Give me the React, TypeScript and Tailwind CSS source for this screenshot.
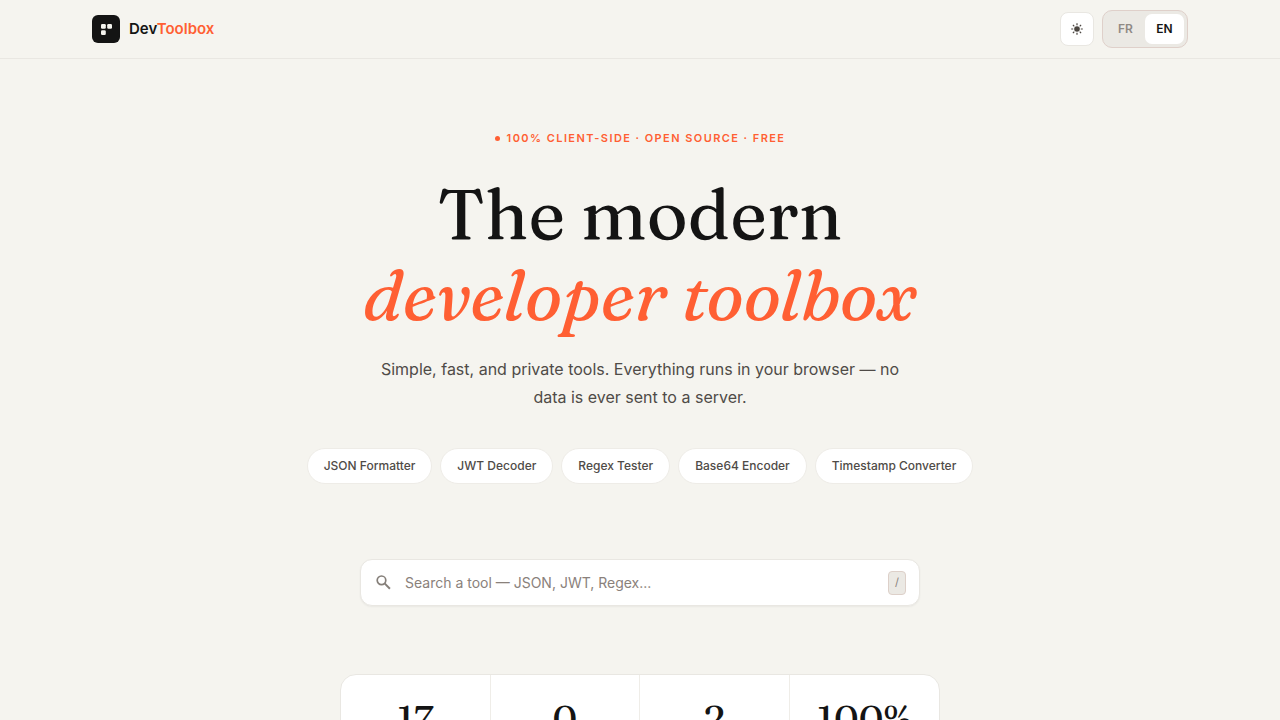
import React, { useState } from "react";
import clsx from "clsx";

const quickLinks = [
  { label: "JSON Formatter", href: "#json-formatter" },
  { label: "JWT Decoder", href: "#jwt-decoder" },
  { label: "Regex Tester", href: "#regex-tester" },
  { label: "Base64 Encoder", href: "#base64-encoder" },
  { label: "Timestamp Converter", href: "#timestamp-converter" },
];

const stats = ["17", "0", "2", "100%"];

const LogoMark = () => (
  <svg viewBox="0 0 28 28" className="size-7" aria-hidden="true">
    <rect width="28" height="28" rx="6" fill="#141414" />
    <rect x="9" y="9" width="4.8" height="4.8" rx="1.2" fill="#f5f4ef" />
    <rect x="15.2" y="9" width="4.8" height="4.8" rx="1.2" fill="#f5f4ef" />
    <rect x="9" y="15.2" width="4.8" height="4.8" rx="1.2" fill="#f5f4ef" />
  </svg>
);

const SunIcon = () => (
  <svg viewBox="0 0 12 12" className="size-3" aria-hidden="true">
    <circle cx="6" cy="6" r="2.8" fill="#4a4540" />
    <path
      d="M6 .2v2M6 9.8v2M.2 6h2M9.8 6h2M1.9 1.9l1.4 1.4M8.7 8.7l1.4 1.4M1.9 10.1l1.4-1.4M8.7 3.3l1.4-1.4"
      stroke="#4a4540"
      strokeWidth="1.2"
    />
  </svg>
);

const SearchIcon = () => (
  <svg viewBox="0 0 16 16" className="size-4 shrink-0" fill="none" aria-hidden="true">
    <circle cx="5.5" cy="5.3" r="4.3" stroke="#857f79" strokeWidth="1.7" />
    <path d="m8.6 8.4 5.3 5.3" stroke="#857f79" strokeWidth="2" />
  </svg>
);

const Header = () => {
  const [lang, setLang] = useState("EN");

  return (
    <header className="border-b border-[#e9e7e2]">
      <div className="mx-auto flex h-[58px] max-w-[1160px] items-center justify-between px-8">
        <a href="#home" className="flex items-center gap-[9px]">
          <LogoMark />
          <span className="text-[15px] font-semibold text-[#141414]">
            Dev<span className="text-[#ff5f33]">Toolbox</span>
          </span>
        </a>
        <div className="flex items-center gap-2">
          <button
            type="button"
            aria-label="Toggle theme"
            className="flex size-[34px] items-center justify-center rounded-lg border border-[#e9e7e2] bg-white"
          >
            <SunIcon />
          </button>
          <div className="flex rounded-[10px] border border-[#dfd0ca] bg-[#ebe9e4] p-[3px]">
            {["FR", "EN"].map((code) => (
              <button
                key={code}
                type="button"
                aria-pressed={lang === code}
                onClick={() => setLang(code)}
                className={clsx(
                  "h-[30px] w-[39px] rounded-[7px] text-xs font-semibold",
                  lang === code ? "bg-white text-[#141414]" : "text-[#8f8a84]"
                )}
              >
                {code}
              </button>
            ))}
          </div>
        </div>
      </div>
    </header>
  );
};

const Hero = () => (
  <section className="flex flex-col items-center pt-[71px] text-center">
    <p className="flex items-center gap-[7px] text-[11px] leading-4 font-semibold tracking-[0.13em] text-[#ff5f33] uppercase">
      <span className="size-[5px] rounded-full bg-[#ff5f33]" />
      100% client-side · Open source · Free
    </p>
    <h1 className="mt-7 font-['Fraunces','Liberation_Serif',serif] text-[70px] leading-[81px] text-[#141414] [font-feature-settings:'ss01']">
      The modern
      <em className="block text-[#ff5f33]">developer toolbox</em>
    </h1>
    <p className="mt-[19px] max-w-[520px] text-base leading-7 text-[#4f4b47]">
      Simple, fast, and private tools. Everything runs in your browser — no data
      is ever sent to a server.
    </p>
    <nav aria-label="Popular tools" className="mt-[37px] flex flex-wrap justify-center gap-2">
      {quickLinks.map(({ label, href }) => (
        <a
          key={href}
          href={href}
          className="flex h-9 items-center rounded-full border border-[#eeece7] bg-white px-4 text-xs font-medium text-[#4f4b47]"
        >
          {label}
        </a>
      ))}
    </nav>
  </section>
);

const SearchBar = () => (
  <div className="mx-auto mt-[75px] flex h-[47px] w-full max-w-[560px] items-center rounded-xl border border-[#e9e7e2] bg-white pr-[13px] pl-[15px] shadow-xs">
    <SearchIcon />
    <input
      type="search"
      aria-label="Search a tool"
      placeholder="Search a tool — JSON, JWT, Regex..."
      className="ml-[13px] min-w-0 flex-1 bg-transparent text-sm text-[#141414] outline-none placeholder:text-[#8a817b]"
    />
    <kbd className="flex h-6 w-[18px] items-center justify-center rounded-sm border border-[#ddd0c9] bg-[#ebe9e4] font-['Inter',sans-serif] text-[11px] text-[#8a817b]">
      /
    </kbd>
  </div>
);

const Stats = () => (
  <section
    aria-label="Statistics"
    className="mx-auto mt-[68px] grid w-full max-w-[600px] grid-cols-4 divide-x divide-[#efede8] rounded-2xl border border-[#e9e7e2] bg-white"
  >
    {stats.map((value) => (
      <p
        key={value}
        className="py-6 text-center font-['Fraunces','Liberation_Serif',serif] text-[38px] leading-10 text-[#141414]"
      >
        {value}
      </p>
    ))}
  </section>
);

const App = () => {
  return (
    <div className="h-screen overflow-hidden bg-[#f5f4ef] font-['Inter',sans-serif]">
      <Header />
      <main>
        <Hero />
        <SearchBar />
        <Stats />
      </main>
    </div>
  );
};

export default App;
